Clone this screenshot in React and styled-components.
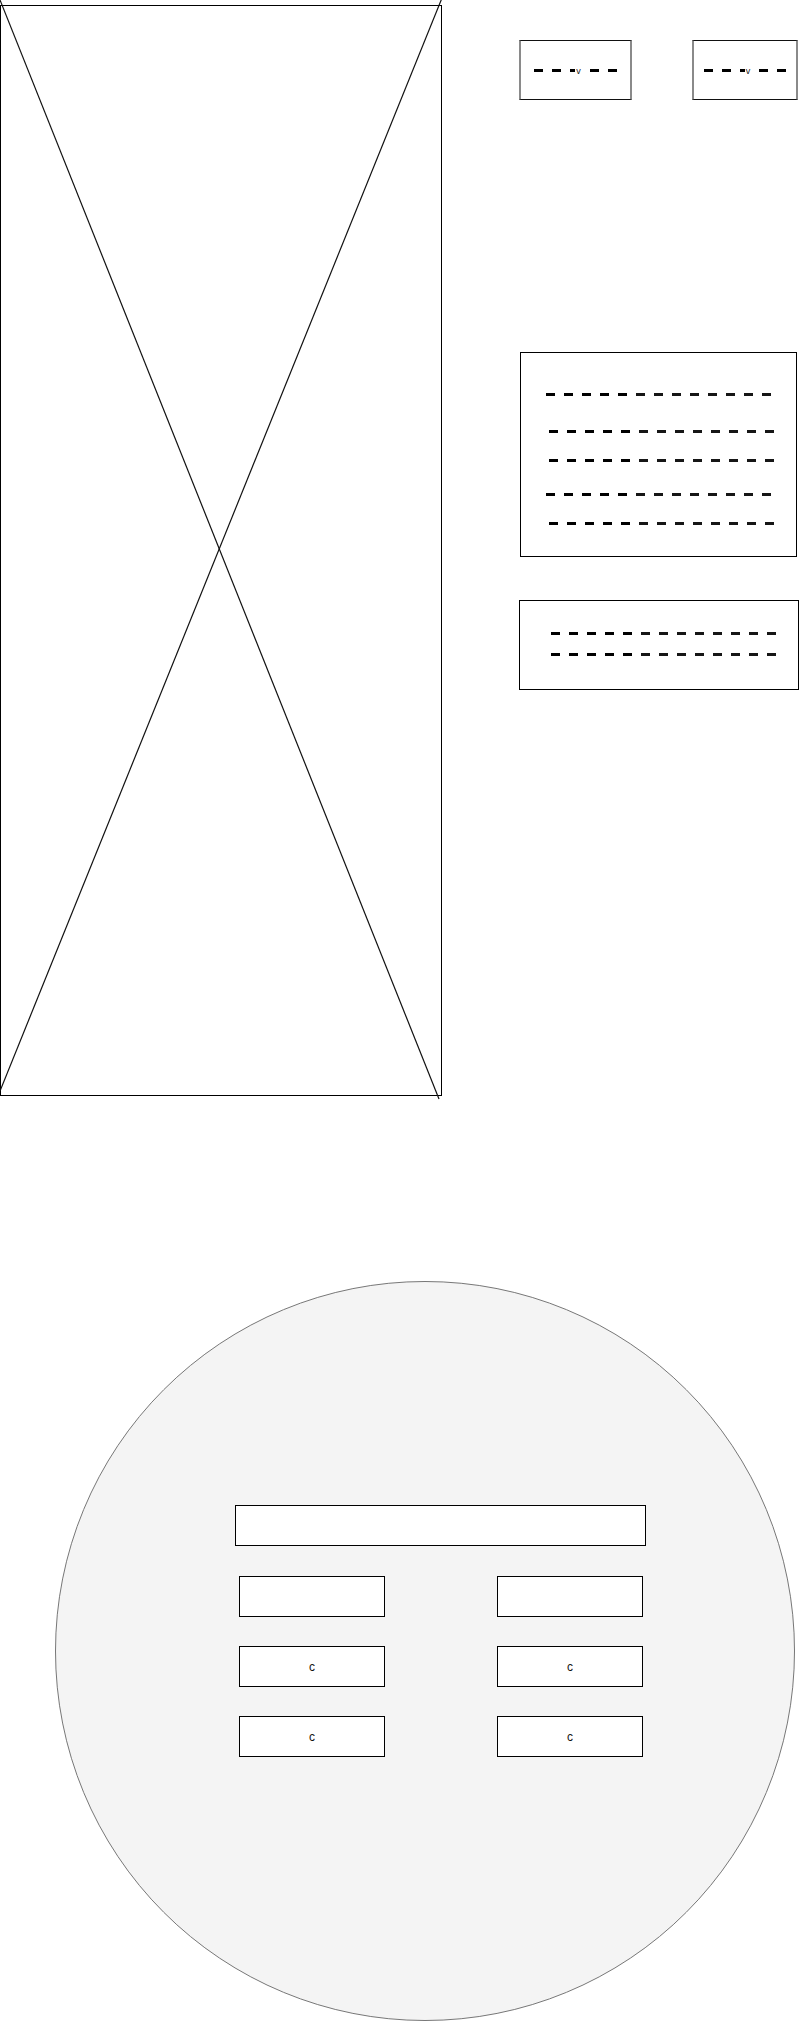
import React from 'react';
import styled, { createGlobalStyle } from 'styled-components';

const GlobalStyle = createGlobalStyle`
	html, body {
		margin: 0;
		padding: 0;
		background: #fff;
	}
	body {
		font-family: "Liberation Sans", Arial, sans-serif;
		color: #000;
	}
`;

const Page = styled.div`
	width: 803px;
	min-height: 2021px;
	overflow: hidden;
	background: #fff;
`;
const TopSection = styled.div`
	display: flex;
	align-items: flex-start;
`;
const ImageBox = styled.div`
	position: relative;
	box-sizing: border-box;
	flex-shrink: 0;
	width: 442px;
	height: 1091px;
	margin-top: 5px;
	border: 1px solid #000;
	background: #fff;
`;
const CrossLines = styled.svg`
	position: absolute;
	left: -1px;
	top: -6px;
	width: 445px;
	height: 1105px;
	overflow: visible;
	pointer-events: none;
`;
const RightCol = styled.div`
	display: flex;
	flex-direction: column;
	width: 280px;
	margin-left: 77px;
	padding-top: 40px;
`;
const DropRow = styled.div`
	display: flex;
	gap: 60px;
`;
const Dropdown = styled.div`
	box-sizing: border-box;
	width: ${p => p.$width}px;
	height: 60px;
	display: flex;
	align-items: center;
	justify-content: center;
	gap: 9px;
	border-top: 1px solid #111;
	border-bottom: 1px solid #111;
	border-left: 2px solid #8a8a8a;
	border-right: 2px solid #8a8a8a;
	background: #fff;
`;
const Caret = styled.div`
	display: flex;
	align-items: center;
	gap: 1px;
`;
const V = styled.span`
	font-size: 9px;
	line-height: 9px;
	padding-top: 2px;
	color: #222;
`;
const Dash = styled.span`
	display: inline-block;
	flex-shrink: 0;
	width: ${p => p.$w || 9}px;
	height: 3px;
	background: ${p => p.$color || '#000'};
`;
const Panel = styled.div`
	box-sizing: border-box;
	width: ${p => p.$width}px;
	height: ${p => p.$height}px;
	margin-top: ${p => p.$top}px;
	margin-left: ${p => p.$left || 0}px;
	border: 1px solid #000;
	background: #fff;
	display: flex;
	flex-direction: column;
`;
const DashLine = styled.div`
	display: flex;
	gap: 9px;
	margin-top: ${p => p.$top}px;
	padding-left: ${p => p.$indent}px;
`;
const Circle = styled.div`
	box-sizing: border-box;
	width: 740px;
	height: 740px;
	margin-top: 185px;
	margin-left: 55px;
	padding-top: 223px;
	padding-left: 179px;
	border: 1px solid #777;
	border-radius: 50%;
	background: #f4f4f4;
`;
const WideBox = styled.div`
	box-sizing: border-box;
	width: 411px;
	height: 41px;
	border: 1px solid #000;
	background: #fff;
`;
const ButtonGrid = styled.div`
	display: grid;
	grid-template-columns: 146px 146px;
	column-gap: 112px;
	row-gap: 29px;
	margin-top: 30px;
	margin-left: 4px;
`;
const Button = styled.div`
	box-sizing: border-box;
	height: 41px;
	display: flex;
	align-items: center;
	justify-content: center;
	border: 1px solid #000;
	background: #fff;
	font-size: 12px;
	color: #111;
`;

function Word({ count = 13 }) {
	return Array.from({ length: count }, (_, i) => (
		<Dash key={i} $color={i < 5 ? '#000' : '#161616'} />
	));
}

function Select({ width }) {
	return (
		<Dropdown $width={width}>
			<Dash />
			<Dash />
			<Caret>
				<Dash $w={5} />
				<V>v</V>
			</Caret>
			<Dash />
			<Dash />
		</Dropdown>
	);
}

const panelRows = [
	{ top: 40, indent: 25 },
	{ top: 34, indent: 28 },
	{ top: 26, indent: 28 },
	{ top: 31, indent: 25 },
	{ top: 26, indent: 28 },
];

export default function App() {
	return (
		<Page>
			<GlobalStyle />
			<TopSection>
				<ImageBox>
					<CrossLines viewBox="0 0 445 1105">
						<line x1="0" y1="0" x2="439" y2="1099" stroke="#111" strokeWidth="1.2" />
						<line x1="442" y1="-2" x2="0" y2="1091" stroke="#111" strokeWidth="1.2" />
					</CrossLines>
				</ImageBox>
				<RightCol>
					<DropRow>
						<Select width={113} />
						<Select width={106} />
					</DropRow>
					<Panel $width={277} $height={205} $top={252} $left={1}>
						{panelRows.map((r, i) => (
							<DashLine key={i} $top={r.top} $indent={r.indent}>
								<Word />
							</DashLine>
						))}
					</Panel>
					<Panel $width={280} $height={90} $top={43}>
						<DashLine $top={31} $indent={31}>
							<Word />
						</DashLine>
						<DashLine $top={18} $indent={31}>
							<Word />
						</DashLine>
					</Panel>
				</RightCol>
			</TopSection>
			<Circle>
				<WideBox />
				<ButtonGrid>
					<Button />
					<Button />
					<Button>c</Button>
					<Button>c</Button>
					<Button>c</Button>
					<Button>c</Button>
				</ButtonGrid>
			</Circle>
		</Page>
	);
}
